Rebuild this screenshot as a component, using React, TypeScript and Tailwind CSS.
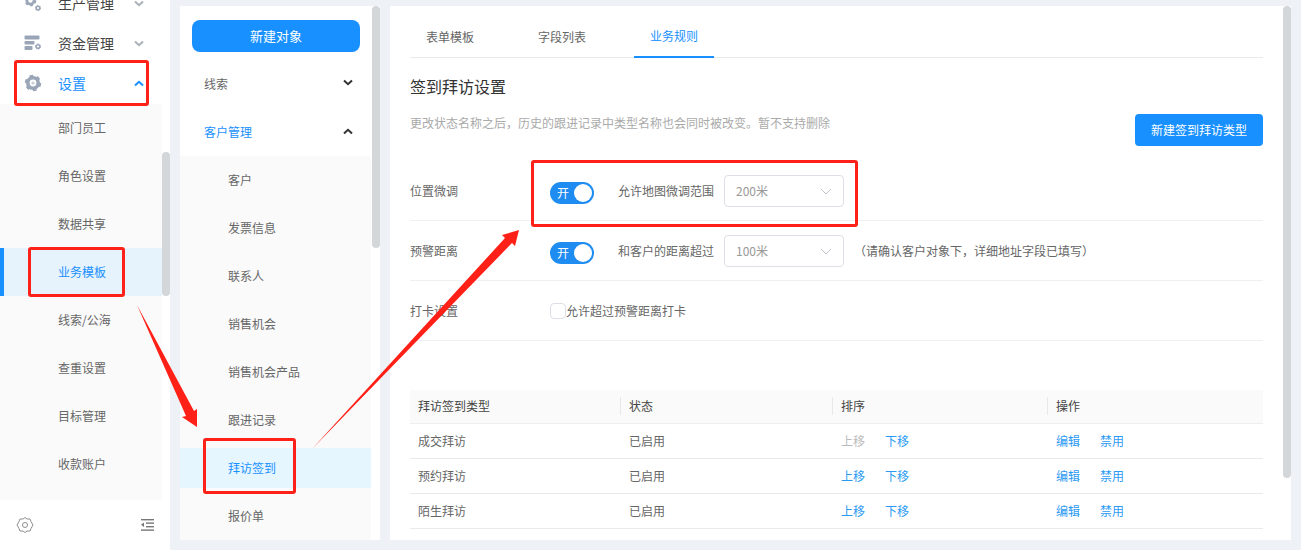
import { ReactNode } from 'react'

const FONT = { fontFamily: '"Noto Sans CJK SC", "Liberation Sans", sans-serif' }

const SUB_MENU = ['部门员工', '角色设置', '数据共享', '业务模板', '线索/公海', '查重设置', '目标管理', '收款账户']
const OBJECTS = ['客户', '发票信息', '联系人', '销售机会', '销售机会产品', '跟进记录', '拜访签到', '报价单']
const RULES = [
  { name: '成交拜访', firstUp: true },
  { name: '预约拜访', firstUp: false },
  { name: '陌生拜访', firstUp: false }
]

function Chevron({ up, className }: { up?: boolean; className: string }) {
  return (
    <svg width="10" height="7" viewBox="0 0 10 7" fill="none" className={className}>
      <path
        d={up ? 'M1 5.5 L5 1.8 L9 5.5' : 'M1 1.5 L5 5.2 L9 1.5'}
        stroke="currentColor"
        strokeWidth="2"
      />
    </svg>
  )
}

// round cog: solid disc, six teeth from a dashed ring, hollow middle
function Cog({ x, y, r, hole }: { x: number; y: number; r: number; hole: number }) {
  const tooth = (2 * Math.PI * r) / 12
  return (
    <g>
      <circle cx={x} cy={y} r={r} fill="currentColor" />
      <circle
        cx={x}
        cy={y}
        r={r}
        fill="none"
        stroke="currentColor"
        strokeWidth={r * 0.36}
        strokeDasharray={`${tooth} ${tooth}`}
      />
      <circle cx={x} cy={y} r={hole} fill="#fff" />
    </g>
  )
}

function GearCluster() {
  return (
    <svg width="18" height="18" viewBox="0 0 18 18" className="text-[#9aa6b8]">
      <Cog x={6.5} y={6.5} r={5} hole={2.2} />
      <Cog x={14} y={14} r={2.6} hole={1.1} />
    </svg>
  )
}

function MoneyIcon() {
  return (
    <svg width="18" height="16" viewBox="0 0 18 16" fill="currentColor" className="text-[#9aa6b8]">
      <rect x="0.5" y="0.5" width="15" height="4" rx="1" />
      <rect x="0.5" y="6" width="10" height="3.5" rx="1" />
      <rect x="0.5" y="11" width="8" height="4" rx="1" />
      <Cog x={14} y={11.5} r={2.6} hole={1.1} />
    </svg>
  )
}

function SettingIcon() {
  return (
    <svg width="18" height="18" viewBox="0 0 18 18" className="text-[#9aa6b8]">
      <Cog x={9} y={9} r={7} hole={3.4} />
      <circle cx="9" cy="9" r="1.6" fill="currentColor" opacity="0.55" />
    </svg>
  )
}

function MainItem({ icon, label, active }: { icon: ReactNode; label: string; active?: boolean }) {
  return (
    <div className="flex h-10 shrink-0 items-center pb-[2px] pl-6 pr-[18px]">
      <div className="flex w-[34px] items-center">{icon}</div>
      <span className={`text-[14px] ${active ? 'text-[#1890ff]' : 'text-[#444]'}`}>{label}</span>
      {active ? (
        <Chevron up className="ml-auto text-[#1890ff]" />
      ) : (
        <Chevron className="ml-auto text-[#a9b1bb]" />
      )}
    </div>
  )
}

function Switch() {
  return (
    <div className="mt-1 flex h-[22px] w-11 items-center rounded-full bg-[#1e8cf0] pl-[7px] pr-[2px]">
      <span className="text-[12px] text-white">开</span>
      <span className="ml-auto h-[18px] w-[18px] rounded-full bg-white" />
    </div>
  )
}

function FakeSelect({ value }: { value: string }) {
  return (
    <div className="flex h-8 w-[120px] items-center rounded border border-[#dcdfe6] pl-[11px] pr-[11px] text-[12px] text-[#999]">
      {value}
      <svg width="12" height="7" viewBox="0 0 12 7" fill="none" className="ml-auto text-[#c0c4cc]">
        <path d="M1 1 L6 6 L11 1" stroke="currentColor" />
      </svg>
    </div>
  )
}

function FormRow({ label, children }: { label: string; children: ReactNode }) {
  return (
    <div className="flex h-[60px] items-center border-b border-[#eef0f3] pt-[1px]">
      <div className="w-[140px] text-[12px] text-[#666]">{label}</div>
      {children}
    </div>
  )
}

function Annotations() {
  return (
    <>
      <div className="absolute left-[14px] top-[60px] h-[46px] w-[135px] rounded-[3px] border-[3px] border-[#ff2117]" />
      <div className="absolute left-[28px] top-[247px] h-[50px] w-[97px] rounded-[3px] border-[3px] border-[#ff2117]" />
      <div className="absolute left-[203px] top-[438px] h-[56px] w-[93px] rounded-[3px] border-[3px] border-[#ff2117]" />
      <div className="absolute left-[531px] top-[160px] h-[67px] w-[327px] rounded-[3px] border-[3px] border-[#ff2117]" />
      <svg width="1301" height="550" className="pointer-events-none absolute left-0 top-0">
        <polygon points="137,305 186,416 182,417 197,427 197,409 194,411" fill="#ff2117" />
        <polygon points="312,449 505,238 502,235 519,230 515,246 512,243" fill="#ff2117" />
      </svg>
    </>
  )
}

export default function App() {
  return (
    <div style={FONT} className="relative flex h-[550px] w-[1301px] overflow-hidden bg-[#eef2f6]">
      {/* main menu */}
      <div className="relative flex h-full w-[170px] shrink-0 flex-col bg-white">
        <div className="-mt-4 flex h-[516px] w-[162px] flex-col overflow-hidden">
          <MainItem icon={<GearCluster />} label="生产管理" />
          <MainItem icon={<MoneyIcon />} label="资金管理" />
          <MainItem icon={<SettingIcon />} label="设置" active />
          <div className="flex flex-1 flex-col bg-[#fafafa]">
            {SUB_MENU.map(item => (
              <div
                key={item}
                className={`flex h-12 shrink-0 items-center pl-[58px] text-[12px] ${
                  item === '业务模板'
                    ? 'border-l-4 border-[#1890ff] bg-[#e6f3fd] !pl-[54px] text-[#1890ff]'
                    : 'text-[#666]'
                }`}
              >
                {item}
              </div>
            ))}
          </div>
        </div>
        <div className="absolute right-0 top-[152px] h-[144px] w-2 rounded bg-[#d3d7da]" />
        <div className="flex h-[50px] items-center justify-between pl-4 pr-4">
          <svg width="18" height="18" viewBox="0 0 18 18" fill="none" stroke="#8f8f8f">
            <path d="M9 1.5 L11 3 L14 3 L15 5.5 L17 9 L15 12.5 L14 15 L11 15 L9 16.5 L7 15 L4 15 L3 12.5 L1 9 L3 5.5 L4 3 L7 3 Z" />
            <circle cx="9" cy="9" r="2.5" />
          </svg>
          <svg width="13" height="12" viewBox="0 0 13 12" fill="#777">
            <rect x="0" y="0" width="13" height="1.4" />
            <rect x="5" y="3.4" width="8" height="1.4" />
            <rect x="5" y="7" width="8" height="1.4" />
            <rect x="0" y="10.4" width="13" height="1.4" />
            <path d="M3 3.6 L0 5.8 L3 8 Z" />
          </svg>
        </div>
      </div>

      {/* object list */}
      <div className="relative ml-[10px] mt-[6px] h-[534px] w-[200px] shrink-0 overflow-hidden bg-white">
        <div className="mx-3 mb-2 mt-[14px] flex h-8 w-[168px] items-center justify-center rounded-lg bg-[#1890ff] text-[13px] text-white">
          新建对象
        </div>
        <div className="flex h-12 items-center justify-between pl-6 pr-[27px] text-[12px] text-[#666]">
          线索
          <Chevron className="-mt-[3px] text-[#333]" />
        </div>
        <div className="flex h-12 items-center justify-between pl-6 pr-[27px] text-[12px] text-[#1890ff]">
          客户管理
          <Chevron up className="-mt-[1px] text-[#333]" />
        </div>
        <div className="flex w-[191px] flex-col bg-[#fafafa] pb-20">
          {OBJECTS.map(item => (
            <div
              key={item}
              className={`mt-1 mb-1 flex h-10 shrink-0 items-center pl-12 text-[12px] ${
                item === '拜访签到' ? 'bg-[#e6f6ff] text-[#1890ff]' : 'text-[#666]'
              }`}
            >
              {item}
            </div>
          ))}
        </div>
        <div className="absolute right-0 top-0 h-[242px] w-2 rounded bg-[#d3d7da]" />
      </div>

      {/* settings panel */}
      <div className="relative ml-[10px] mt-[6px] h-[534px] w-[901px] shrink-0 overflow-hidden bg-white pl-5 pr-7">
        <div className="flex h-[52px] items-center gap-8 border-b border-[#e8eaec] text-[12px] text-[#666]">
          <div className="flex h-[52px] w-20 items-center justify-center pt-[10px]">表单模板</div>
          <div className="flex h-[52px] w-20 items-center justify-center pt-[10px]">字段列表</div>
          <div className="flex h-[52px] w-20 items-center justify-center border-b-2 border-[#1890ff] pt-[11px] text-[#1890ff]">
            业务规则
          </div>
        </div>
        <div className="mt-4 text-[16px] leading-6 text-[#333]">签到拜访设置</div>
        <div className="flex h-[63px] items-start justify-between">
          <div className="mt-4 text-[12px] leading-[18px] text-[#aaa]">
            更改状态名称之后，历史的跟进记录中类型名称也会同时被改变。暂不支持删除
          </div>
          <button className="mt-4 h-8 w-[128px] rounded bg-[#1890ff] text-[12px] text-white">
            新建签到拜访类型
          </button>
        </div>

        <FormRow label="位置微调">
          <Switch />
          <span className="ml-6 mr-[10px] text-[12px] text-[#666]">允许地图微调范围</span>
          <FakeSelect value="200米" />
        </FormRow>
        <FormRow label="预警距离">
          <Switch />
          <span className="ml-6 mr-[10px] text-[12px] text-[#666]">和客户的距离超过</span>
          <FakeSelect value="100米" />
          <span className="ml-[10px] text-[12px] text-[#666]">（请确认客户对象下，详细地址字段已填写）</span>
        </FormRow>
        <FormRow label="打卡设置">
          <span className="h-4 w-4 rounded-sm border border-[#dcdfe6] bg-white" />
          <span className="text-[12px] text-[#666]">允许超过预警距离打卡</span>
        </FormRow>

        <div className="mt-[49px]">
          <div className="grid h-[34px] grid-cols-[210px_212px_215px_1fr] items-center border-b border-[#eceef1] bg-[#fafafa] pb-[2px] text-[12px] text-[#444]">
            {['拜访签到类型', '状态', '排序', '操作'].map((title, i) => (
              <div key={title} className="flex h-[18px] items-center">
                {i > 0 && <span className="h-[18px] w-px bg-[#e8e8e8]" />}
                <span className="pl-2">{title}</span>
              </div>
            ))}
          </div>
          {RULES.map(rule => (
            <div
              key={rule.name}
              className="grid h-[35px] grid-cols-[211px_212px_214px_1fr] items-center border-b border-[#e8eaee] text-[12px] text-[#666]"
            >
              <span className="pl-2">{rule.name}</span>
              <span className="pl-2">已启用</span>
              <div className="flex gap-5 pl-2">
                <span className={rule.firstUp ? 'text-[#bbb]' : 'text-[#2b9af3]'}>上移</span>
                <span className="text-[#2b9af3]">下移</span>
              </div>
              <div className="flex gap-5 pl-[9px] text-[#2b9af3]">
                <span>编辑</span>
                <span>禁用</span>
              </div>
            </div>
          ))}
        </div>
        <div className="absolute right-0 top-0 h-[472px] w-2 rounded bg-[#d3d7da]" />
      </div>

      <Annotations />
    </div>
  )
}
